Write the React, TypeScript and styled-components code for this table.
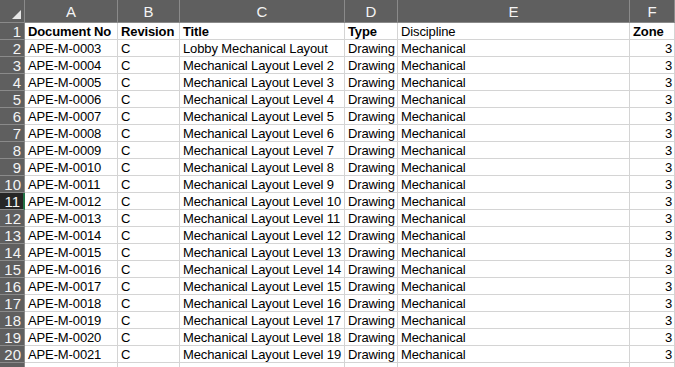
import React from "react";
import styled, { createGlobalStyle } from "styled-components";

const GlobalStyle = createGlobalStyle`
  html, body {
    margin: 0;
    padding: 0;
    background: #ffffff;
    overflow: hidden;
  }
`;

const COLS = [25, 93, 62, 165, 53, 232, 45];
const LETTERS = ["A", "B", "C", "D", "E", "F"];

const Sheet = styled.div`
  display: grid;
  grid-template-columns: ${COLS.map((c) => c + "px").join(" ")};
  grid-auto-rows: 17px;
  grid-template-rows: 23px;
  font-family: "Liberation Sans", Arial, sans-serif;
  width: 675px;
  height: 367px;
  overflow: hidden;
`;

const Corner = styled.div`
  position: relative;
  background: #5f5f5f;
  border-right: 1px solid #8a8a8a;
  border-bottom: 1px solid #8a8a8a;
  box-sizing: border-box;
`;

const Triangle = styled.div`
  position: absolute;
  right: 3px;
  bottom: 3px;
  width: 0;
  height: 0;
  border-left: 9px solid transparent;
  border-bottom: 9px solid #e6e6e6;
`;

const ColHead = styled.div`
  display: flex;
  align-items: center;
  justify-content: center;
  background: #5f5f5f;
  color: #f4f4f4;
  font-size: 15px;
  border-right: 1px solid #8a8a8a;
  border-bottom: 1px solid #8a8a8a;
  box-sizing: border-box;
  padding-top: 1px;
`;

const RowHead = styled.div<{ $active?: boolean }>`
  display: flex;
  align-items: center;
  justify-content: flex-end;
  padding-right: 3px;
  background: ${(p) => (p.$active ? "#262626" : "#5f5f5f")};
  color: #f4f4f4;
  font-size: 15px;
  border-right: ${(p) => (p.$active ? "2px solid #217346" : "1px solid #8a8a8a")};
  border-bottom: 1px solid #8a8a8a;
  box-sizing: border-box;
`;

const Cell = styled.div<{ $bold?: boolean; $right?: boolean }>`
  display: flex;
  align-items: center;
  justify-content: ${(p) => (p.$right ? "flex-end" : "flex-start")};
  padding: ${(p) => (p.$right ? "0 2px 0 0" : "0 0 0 3px")};
  font-size: 13px;
  letter-spacing: -0.12px;
  font-weight: ${(p) => (p.$bold ? 700 : 400)};
  color: #000000;
  white-space: nowrap;
  overflow: hidden;
  border-right: 1px solid #d4d4d4;
  border-bottom: 1px solid #d4d4d4;
  box-sizing: border-box;
`;

type Row = { cells: string[]; bold?: boolean[] };

const rows: Row[] = [
  {
    cells: ["Document No", "Revision", "Title", "Type", "Discipline", "Zone"],
    bold: [true, true, true, true, false, true],
  },
];

for (let i = 0; i < 19; i++) {
  rows.push({
    cells: [
      "APE-M-" + String(i + 3).padStart(4, "0"),
      "C",
      i === 0 ? "Lobby Mechanical Layout" : "Mechanical Layout Level " + (i + 1),
      "Drawing",
      "Mechanical",
      "3",
    ],
  });
}
// partly visible row at the bottom edge
rows.push({ cells: ["", "", "", "", "", ""] });

export default function App() {
  return (
    <>
      <GlobalStyle />
      <Sheet>
        <Corner>
          <Triangle />
        </Corner>
        {LETTERS.map((l) => (
          <ColHead key={l}>{l}</ColHead>
        ))}
        {rows.map((row, r) => (
          <React.Fragment key={r}>
            <RowHead $active={r === 10}>{r < 20 ? r + 1 : ""}</RowHead>
            {row.cells.map((c, ci) => (
              <Cell
                key={ci}
                $bold={row.bold?.[ci]}
                $right={ci === 5 && r > 0}
              >
                {c}
              </Cell>
            ))}
          </React.Fragment>
        ))}
      </Sheet>
    </>
  );
}
